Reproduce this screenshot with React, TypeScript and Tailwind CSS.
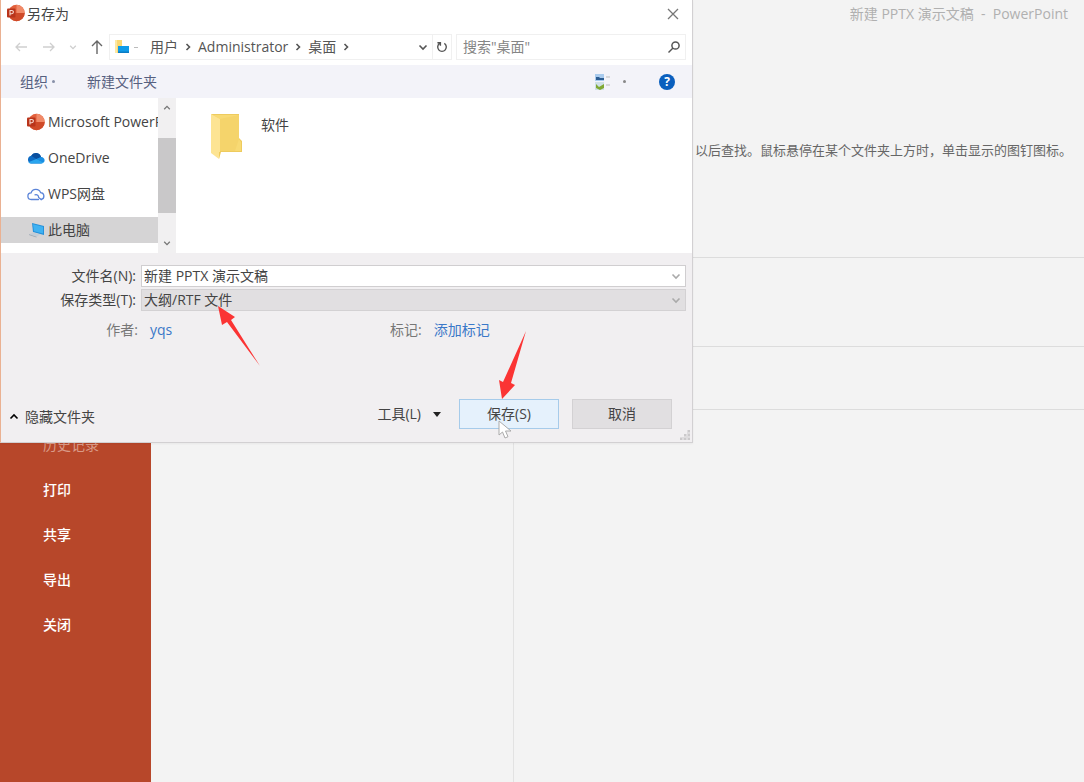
import React, { useState } from 'react';

interface IconProps {
  className?: string;
}

const PowerPointIcon: React.FC<IconProps> = ({ className }) => (
  <svg viewBox="0 0 18 18" className={className} aria-hidden="true">
    <circle cx="9.5" cy="9" r="8.2" fill="#e2603c" />
    <path d="M9.5 .8a8.2 8.2 0 0 1 8.2 8.2H9.5z" fill="#f08a68" />
    <path d="M1.3 9h16.4a8.2 8.2 0 0 1-16.4 0z" fill="#cf4a28" />
    <rect x="0" y="4.5" width="8.5" height="9" rx="1" fill="#b9341a" />
    <path d="M3 11.6V6.5h1.8a1.6 1.6 0 0 1 0 3.2H3" fill="none" stroke="#f7d9cf" strokeWidth="1.1" />
  </svg>
);

const OneDriveIcon: React.FC<IconProps> = ({ className }) => (
  <svg viewBox="0 0 18 18" className={className} aria-hidden="true">
    <path d="M4 14.5a4 4 0 0 1 .2-7.8A5.3 5.3 0 0 1 14 8a3.4 3.4 0 0 1 .4 6.5z" fill="#0f6cc4" />
    <path d="M4.2 6.7A5.3 5.3 0 0 1 14 8l-4.6 2z" fill="#0a4f9e" />
    <path d="M14 8a3.4 3.4 0 0 1 2.8 5.5L9.4 10z" fill="#1a8fe3" />
    <path d="M4 14.5a3.9 3.9 0 0 1-2.7-1.3L9.4 10l7.4 3.5a3.4 3.4 0 0 1-2.4 1z" fill="#2aa5ee" />
  </svg>
);

const WpsCloudIcon: React.FC<IconProps> = ({ className }) => (
  <svg viewBox="0 0 18 18" className={className} fill="none" stroke="#5b84d8" strokeWidth="1.3" strokeLinecap="round" aria-hidden="true">
    <path d="M11.5 14.5H4.3a3.3 3.3 0 0 1-.2-6.6A5 5 0 0 1 13.6 7.6a3.5 3.5 0 0 1 .6 6.9" />
    <path d="M8 9.8c2.2-.6 3.8.8 3.6 2.6M11.6 12.4l2.6 2.1" />
  </svg>
);

const ComputerIcon: React.FC<IconProps> = ({ className }) => (
  <svg viewBox="0 0 18 18" className={className} aria-hidden="true">
    <path d="M5 2l12 3v9L6 11z" fill="#2590d9" />
    <path d="M6 3.3l10 2.5v6.8L7 10.2z" fill="#3fb2f2" />
    <path d="M2 13.2l4-1.8 7.5 2.2-4 2.2z" fill="#c3cdd6" />
    <path d="M2 13.2l7.5 2.6v.8L2 14z" fill="#98a5b0" />
  </svg>
);

const UserFolderIcon: React.FC<IconProps> = ({ className }) => (
  <svg viewBox="0 0 16 16" className={className} aria-hidden="true">
    <path d="M1 1h7v13H1z" fill="#fbd873" />
    <path d="M1 1h2v13H1z" fill="#fde8a4" />
    <rect x="4" y="7" width="11" height="7" fill="#0f9be8" />
    <path d="M4 12.5h11V14H4z" fill="#0a7cc4" />
  </svg>
);

const FolderIcon: React.FC<IconProps> = ({ className }) => (
  <svg viewBox="0 0 32 48" className={className} aria-hidden="true">
    <path d="M1 1h28v24l3 3v11H10z" fill="#eecb5e" />
    <path d="M3 2h26v24l2 3v9H10V6z" fill="#f8da74" />
    <path d="M10 6L29 2v24l-4 12H10z" fill="#f5d46b" />
    <path d="M1 1l9 5v33l-1 7-8-6z" fill="#fde493" />
    <path d="M9 39h2l-2 7z" fill="#f0cb5c" />
  </svg>
);

const ViewIcon: React.FC<IconProps> = ({ className }) => (
  <svg viewBox="0 0 16 18" className={className} aria-hidden="true">
    <rect x="0" y="1" width="9" height="7" fill="#a9cbee" />
    <path d="M1 4h3l1 1h4v2H1z" fill="#2c5d93" />
    <rect x="0" y="9" width="9" height="8" fill="#cfe0e6" />
    <path d="M1 11l3 3 5-3v4l-4 2-4-2z" fill="#7fa832" />
    <path d="M11 4h4M11 12h4" stroke="#bbb" />
  </svg>
);

const Chevron: React.FC<IconProps & { d: string }> = ({ className, d }) => (
  <svg viewBox="0 0 10 10" className={className} fill="none" stroke="currentColor" strokeWidth="1.6" aria-hidden="true">
    <path d={d} />
  </svg>
);

const DOWN = 'M1.5 3.5L5 7l3.5-3.5';
const UP = 'M1.5 6.5L5 3l3.5 3.5';
const RIGHT = 'M3.5 2L6.5 5l-3 3';

const menuItems = ['打印', '共享', '导出', '关闭'];

const places = [
  { label: 'Microsoft PowerPoint', icon: PowerPointIcon },
  { label: 'OneDrive', icon: OneDriveIcon },
  { label: 'WPS网盘', icon: WpsCloudIcon },
  { label: '此电脑', icon: ComputerIcon },
];

const crumbs = ['用户', 'Administrator', '桌面'];

const AddressRow: React.FC = () => (
  <div className="flex h-[26px] items-center pr-[6px] pl-3 text-[#555]">
    <button type="button" aria-label="后退" className="w-4 text-[#cfcfcf]">
      <svg viewBox="0 0 16 16" className="size-4" fill="none" stroke="currentColor" strokeWidth="1.3"><path d="M14 8H3M7 4L3 8l4 4" /></svg>
    </button>
    <button type="button" aria-label="前进" className="ml-3 w-4 text-[#cfcfcf]">
      <svg viewBox="0 0 16 16" className="size-4" fill="none" stroke="currentColor" strokeWidth="1.3"><path d="M2 8h11M9 4l4 4-4 4" /></svg>
    </button>
    <button type="button" aria-label="最近位置" className="ml-3 w-2 text-[#cfcfcf]">
      <Chevron d={DOWN} className="size-2" />
    </button>
    <button type="button" aria-label="上移" className="ml-3 w-4 text-[#666]">
      <svg viewBox="0 0 16 16" className="size-4" fill="none" stroke="currentColor" strokeWidth="1.4"><path d="M8 15V2M3 7l5-5 5 5" /></svg>
    </button>
    <div className="ml-1 flex h-full min-w-0 flex-1 items-center border border-[#f0f0f0] pl-1">
      <UserFolderIcon className="size-4 shrink-0" />
      <span className="mx-1 h-px w-1 bg-[#bbb]" />
      <ol className="ml-2 flex flex-1 items-center">
        {crumbs.map((crumb) => (
          <li key={crumb} className="flex items-center">
            <a href="#">{crumb}</a>
            <Chevron d={RIGHT} className="mx-[5px] size-[10px]" />
          </li>
        ))}
      </ol>
      <button type="button" aria-label="历史位置" className="mr-1">
        <Chevron d={DOWN} className="size-[10px]" />
      </button>
      <button type="button" aria-label="刷新" className="flex h-full w-[19px] items-center justify-center border-l border-[#f0f0f0]">
        <svg viewBox="0 0 12 12" className="size-3" fill="none" stroke="currentColor" strokeWidth="1.4"><path d="M8.3 2.4a4.3 4.3 0 1 1-4.6 0M1.4 1.8h3v3" /></svg>
      </button>
    </div>
    <div className="ml-1 flex h-full w-[230px] items-center border border-[#f0f0f0] pr-1 pl-[6px]">
      <input type="search" aria-label="搜索" placeholder={'搜索"桌面"'} className="min-w-0 flex-1 outline-none placeholder:text-[#858585]" />
      <svg viewBox="0 0 14 14" className="size-[14px]" fill="none" stroke="currentColor" strokeWidth="1.5" aria-hidden="true">
        <circle cx="8.5" cy="5.5" r="3.6" />
        <path d="M6 8l-4.5 4.5" />
      </svg>
    </div>
  </div>
);

const Toolbar: React.FC = () => (
  <div className="mt-[5px] flex h-[33px] items-center bg-[#f3f3f9] pr-[17px] pl-[19px] text-[#566080]">
    <button type="button" className="flex items-center gap-1">
      组织
      <span className="size-[3px] rounded-full bg-[#8890a8]" />
    </button>
    <button type="button" className="ml-8">新建文件夹</button>
    <button type="button" aria-label="更改视图" className="ml-auto flex items-center gap-3">
      <ViewIcon className="h-[18px] w-4" />
      <span className="size-[3px] rounded-full bg-[#888]" />
    </button>
    <button type="button" aria-label="帮助" className="ml-[33px] size-4 rounded-full bg-[#0a5fbe] text-xs leading-4 font-bold text-white">?</button>
  </div>
);

const Browser: React.FC = () => (
  <div className="flex h-[155px]">
    <ul className="flex w-[157px] flex-col gap-[10px] overflow-hidden pt-[11px] text-[#444]">
      {places.map(({ label, icon: Icon }) => (
        <li key={label} className={label === '此电脑' ? 'bg-[#d5d4d5]' : ''}>
          <a href="#" className="flex h-[26px] items-center gap-[3px] pl-[26px] whitespace-nowrap">
            <Icon className="size-[18px] shrink-0" />
            {label}
          </a>
        </li>
      ))}
    </ul>
    <div className="flex w-[18px] flex-col items-center bg-[#f1f0f1] py-[6px] text-[#777]">
      <Chevron d={UP} className="size-2" />
      <div className="my-[26px] w-full flex-1 bg-[#c9c8c9]" />
      <Chevron d={DOWN} className="size-2" />
    </div>
    <div className="flex flex-1 items-start pt-[15px] pl-[34px]">
      <FolderIcon className="h-12 w-8" />
      <span className="ml-[19px] pt-[2px] text-[#444]">软件</span>
    </div>
  </div>
);

const SaveForm: React.FC = () => {
  const [fileName, setFileName] = useState('新建 PPTX 演示文稿');

  return (
    <form className="relative bg-[#f1eff1] pt-3 text-[#444]" onSubmit={(e) => e.preventDefault()}>
      <div className="grid grid-cols-[135px_1fr] gap-x-[5px] gap-y-[2px] pr-[6px]">
        <label htmlFor="file-name" className="text-right leading-[22px]">文件名(N):</label>
        <div className="flex h-[22px] items-center border border-[#d0ced0] bg-white pr-1">
          <input
            id="file-name"
            value={fileName}
            onChange={(e) => setFileName(e.target.value)}
            className="min-w-0 flex-1 pl-[2px] leading-5 outline-none"
          />
          <Chevron d={DOWN} className="size-[10px] text-[#aaa]" />
        </div>
        <label htmlFor="file-type" className="text-right leading-[22px]">保存类型(T):</label>
        <div className="relative h-[22px]">
          <select id="file-type" className="block h-full w-full appearance-none border border-[#d3d1d3] bg-[#e1dfe1] pl-[2px] leading-5 outline-none">
            <option>大纲/RTF 文件</option>
          </select>
          <Chevron d={DOWN} className="pointer-events-none absolute top-[6px] right-[5px] size-[10px] text-[#aaa]" />
        </div>
      </div>

      <div className="mt-[9px] grid grid-cols-[137px_1fr_1fr] leading-5 text-[#777]">
        <span className="text-right">作者:</span>
        <a href="#" className="pl-3 text-[#3a78c8]">yqs</a>
        <span className="-ml-[25px]">
          标记:
          <a href="#" className="ml-3 text-[#3a78c8]">添加标记</a>
        </span>
      </div>

      <div className="mt-[59px] flex h-[43px] items-start pr-5">
        <button type="button" className="mt-2 ml-2 flex items-center gap-[6px] leading-5">
          <Chevron d={UP} className="size-[10px] text-black" />
          隐藏文件夹
        </button>
        <button type="button" className="mr-[18px] ml-auto flex h-[30px] items-center gap-3">
          工具(L)
          <svg viewBox="0 0 8 5" className="h-[5px] w-2" aria-hidden="true"><path d="M0 0h8L4 5z" fill="#222" /></svg>
        </button>
        <button type="submit" className="h-[30px] w-[100px] border border-[#a6cbea] bg-[#e5f1fc]">保存(S)</button>
        <button type="button" className="ml-[13px] h-[30px] w-[100px] border border-[#d3d1d3] bg-[#e1dfe1]">取消</button>
      </div>

      <svg viewBox="0 0 10 10" className="absolute right-[2px] bottom-[2px] size-[10px]" fill="#cbc9cb" aria-hidden="true">
        <path d="M7 0h3v10H7zM4 4h3v6H4zM0 7h4v3H0z" opacity=".5" />
        <path d="M8 0h2v2H8zM8 4h2v2H8zM4 4h2v2H4zM8 8h2v2H8zM4 8h2v2H4zM0 8h2v2H0z" />
      </svg>
    </form>
  );
};

const SaveDialog: React.FC = () => (
  <div role="dialog" aria-label="另存为" className="absolute top-0 left-0 w-[64%] max-w-[693px] min-w-[640px] border-r border-b border-l border-[#d2d0d2] border-l-[#eab192] bg-white shadow-xs">
    <div className="flex h-[34px] items-start pt-1 pr-[13px] pl-[6px]">
      <PowerPointIcon className="size-[18px]" />
      <h1 className="ml-[2px] leading-5 text-[#444]">另存为</h1>
      <button type="button" aria-label="关闭对话框" className="mt-1 ml-auto text-[#777]">
        <svg viewBox="0 0 12 12" className="size-3" fill="none" stroke="currentColor" strokeWidth="1.3"><path d="M1 1l10 10M11 1L1 11" /></svg>
      </button>
    </div>
    <AddressRow />
    <Toolbar />
    <Browser />
    <SaveForm />

    <svg viewBox="0 0 42 60" className="pointer-events-none absolute top-[306px] left-[217px] h-[60px] w-[42px]" aria-hidden="true">
      <path d="M0 0L17 11l-4 3 29 46L9 16l-5 3z" fill="#fb3434" />
    </svg>
    <svg viewBox="0 0 27 68" className="pointer-events-none absolute top-[331px] left-[498px] h-[68px] w-[27px]" aria-hidden="true">
      <path d="M27 0L12 52l4 2L3 68 0 49l4 2z" fill="#fb3434" />
    </svg>
    <svg viewBox="0 0 14 20" className="pointer-events-none absolute top-[420px] left-[497px] h-5 w-[14px]" aria-hidden="true">
      <path d="M1 1v14l3.5-3 2.5 6 3-1.3-2.5-5.7H13z" fill="#fff" stroke="#aaa" />
    </svg>
  </div>
);

const App: React.FC = () => (
  <div className="relative flex min-h-screen overflow-hidden bg-[#f3f3f3] font-['Open_Sans','Noto_Sans_CJK_SC',sans-serif] text-sm">
    <nav className="w-[151px] shrink-0 bg-[#b7472a] pt-[422px] font-medium text-white">
      <ul>
        <li className="flex h-[45px] items-center pl-[43px] font-normal text-[#d99a87]">历史记录</li>
        {menuItems.map((item) => (
          <li key={item}>
            <a href="#" className="flex h-[45px] items-center pl-[43px]">{item}</a>
          </li>
        ))}
      </ul>
    </nav>
    <section className="w-[363px] shrink-0 border-r border-[#e2e2e2]" />
    <main className="min-w-0 flex-1">
      <div className="h-[258px] border-b border-[#dcdcdc]">
        <p className="pt-1 pr-4 text-right leading-5 whitespace-pre text-[#b0b0b0]">新建 PPTX 演示文稿  -  PowerPoint</p>
        <p className="pt-[116px] pr-3 text-right text-[13px] leading-5 whitespace-nowrap text-[#666]">
          以后查找。鼠标悬停在某个文件夹上方时，单击显示的图钉图标。
        </p>
      </div>
      <div className="h-[89px] border-b border-[#dcdcdc]" />
      <div className="h-[63px] border-b border-[#dcdcdc]" />
    </main>
    <SaveDialog />
  </div>
);

export default App;
